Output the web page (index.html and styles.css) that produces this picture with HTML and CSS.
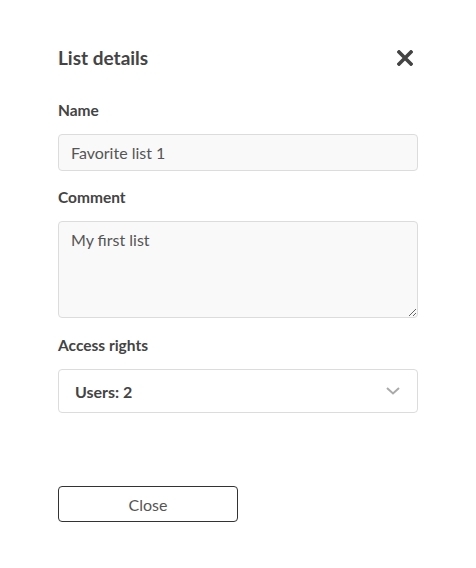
FILE: index.html
```html
<!DOCTYPE html>
<html lang="en">
<head>
<meta charset="utf-8">
<title>List details</title>
<link rel="stylesheet" href="styles.css">
</head>
<body>
<div class="dialog">
  <div class="header">
    <h1 class="title">List details</h1>
    <button class="close-x" aria-label="Close">
      <svg width="16" height="16" viewBox="0 0 16 16"><path d="M2 2 L14 14 M14 2 L2 14" stroke="#444" stroke-width="3.6" stroke-linecap="square"/></svg>
    </button>
  </div>
  <div class="field">
    <label class="label">Name</label>
    <input class="input" type="text" value="Favorite list 1">
  </div>
  <div class="field">
    <label class="label">Comment</label>
    <textarea class="textarea">My first list</textarea>
  </div>
  <div class="field field-access">
    <label class="label">Access rights</label>
    <div class="select">
      <span class="select-text">Users: 2</span>
      <svg class="chevron" width="14" height="8" viewBox="0 0 14 8"><path d="M1 1 L7 6.5 L13 1" fill="none" stroke="#aaa" stroke-width="2"/></svg>
    </div>
  </div>
  <div class="footer">
    <button class="btn">Close</button>
  </div>
</div>
</body>
</html>
```
FILE: styles.css
```css
* { box-sizing: border-box; }
html, body { margin: 0; padding: 0; background: #fff; }
body { font-family: "Lato", "Open Sans", sans-serif; color: #444; }
.dialog { width: 476px; padding: 46px 58px 0 58px; }
.header { display: flex; justify-content: space-between; align-items: center; height: 24px; }
.title { margin: 0; font-size: 19px; font-weight: 700; color: #444; line-height: 24px; }
.close-x { border: 0; background: none; padding: 0; margin-right: 5px; width: 16px; height: 16px; display: flex; }
.field { display: flex; flex-direction: column; }
.header + .field { margin-top: 30px; }
.field + .field { margin-top: 16px; }
.field + .field-access { margin-top: 17px; }
.label { font-size: 15.5px; font-weight: 700; line-height: 20px; color: #444; margin-bottom: 14px; }
.input { height: 37px; border: 1px solid #dcdcdc; border-radius: 4px; background: #f9f9f9; padding: 0 12px; font-family: inherit; font-size: 16px; color: #555; outline: none; }
.textarea { height: 97px; border: 1px solid #dcdcdc; border-radius: 4px; background: #f9f9f9; padding: 8px 12px; font-family: inherit; font-size: 16px; color: #555; line-height: 20px; outline: none; resize: vertical; }
.select { height: 44px; border: 1px solid #dcdcdc; border-radius: 4px; background: #fff; display: flex; align-items: center; justify-content: space-between; padding: 0 17px 0 16px; }
.select-text { font-size: 16px; font-weight: 700; color: #444; }
.footer { margin-top: 73px; }
.btn { width: 180px; height: 36px; border: 1px solid #333; border-radius: 4px; background: #fff; font-family: inherit; font-size: 16px; color: #555; }
```
